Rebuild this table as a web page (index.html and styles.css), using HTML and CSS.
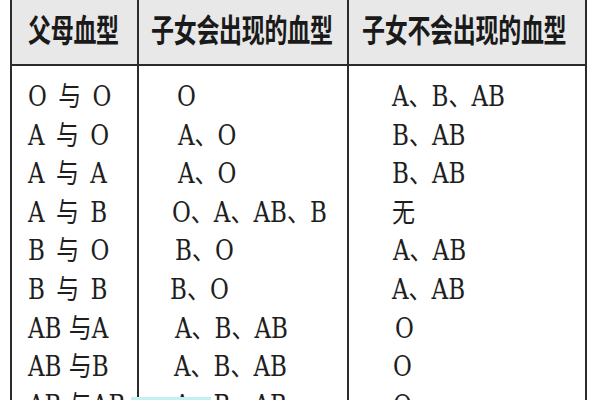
FILE: index.html
```html
<!DOCTYPE html>
<html lang="zh-CN">
<head>
<meta charset="utf-8">
<title>血型遗传表</title>
<link rel="stylesheet" href="styles.css">
</head>
<body>
<div class="page">
  <div class="table">
    <div class="row head">
      <div class="cell c1"><span class="ht">父母血型</span></div>
      <div class="cell c2"><span class="ht">子女会出现的血型</span></div>
      <div class="cell c3"><span class="ht">子女不会出现的血型</span></div>
    </div>
    <div class="row first">
      <div class="cell c1"><span class="bt pair">O 与 O</span></div>
      <div class="cell c2"><span class="bt s2">O</span></div>
      <div class="cell c3"><span class="bt">A、B、AB</span></div>
    </div>
    <div class="row">
      <div class="cell c1"><span class="bt pair">A 与 O</span></div>
      <div class="cell c2"><span class="bt s3">A、O</span></div>
      <div class="cell c3"><span class="bt">B、AB</span></div>
    </div>
    <div class="row">
      <div class="cell c1"><span class="bt pair">A 与 A</span></div>
      <div class="cell c2"><span class="bt s3">A、O</span></div>
      <div class="cell c3"><span class="bt">B、AB</span></div>
    </div>
    <div class="row">
      <div class="cell c1"><span class="bt pair">A 与 B</span></div>
      <div class="cell c2"><span class="bt s0">O、A、AB、B</span></div>
      <div class="cell c3"><span class="bt">无</span></div>
    </div>
    <div class="row">
      <div class="cell c1"><span class="bt pair">B 与 O</span></div>
      <div class="cell c2"><span class="bt s1">B、O</span></div>
      <div class="cell c3"><span class="bt s1">A、AB</span></div>
    </div>
    <div class="row">
      <div class="cell c1"><span class="bt pair">B 与 B</span></div>
      <div class="cell c2"><span class="bt sn">B、O</span></div>
      <div class="cell c3"><span class="bt">A、AB</span></div>
    </div>
    <div class="row">
      <div class="cell c1"><span class="bt">AB 与A</span></div>
      <div class="cell c2"><span class="bt s1">A、B、AB</span></div>
      <div class="cell c3"><span class="bt s2">O</span></div>
    </div>
    <div class="row">
      <div class="cell c1"><span class="bt">AB 与B</span></div>
      <div class="cell c2"><span class="bt">A、B、AB</span></div>
      <div class="cell c3"><span class="bt s1">O</span></div>
    </div>
    <div class="row">
      <div class="cell c1"><span class="bt">AB 与AB</span></div>
      <div class="cell c2"><span class="bt">A、B、AB</span></div>
      <div class="cell c3"><span class="bt s1">O</span></div>
    </div>
  </div>
  <div class="glint"></div>
</div>
</body>
</html>
```

FILE: styles.css
```css
html, body {
  margin: 0;
  padding: 0;
  background: #ffffff;
}

.page {
  position: relative;
  width: 600px;
  height: 400px;
  overflow: hidden;
  background: #ffffff;
}

.table {
  margin-left: 10px;
  width: 577px;
  display: flex;
  flex-direction: column;
}

.row {
  display: grid;
  grid-template-columns: 127px 210px 240px;
}

.cell {
  border-left: 2px solid #2b2b2b;
  box-sizing: border-box;
  display: flex;
  align-items: center;
  height: 38.6px;
  color: #1e1e1e;
}

.cell.c3 {
  border-right: 2px solid #2b2b2b;
}

.head .cell {
  height: 66px;
  background: #e8e8e8;
  border-bottom: 2px solid #2b2b2b;
  align-items: flex-start;
}

.first .cell {
  height: 50.6px;
  padding-top: 12px;
}

.ht {
  display: inline-block;
  font-family: "Noto Sans CJK SC", sans-serif;
  font-weight: 700;
  font-size: 23px;
  line-height: 56px;
  letter-spacing: -0.3px;
  color: #1a1a1a;
  transform: scaleY(1.38);
  white-space: nowrap;
}

.head .c1 { padding-left: 16px; }
.head .c2 { padding-left: 12px; }
.head .c3 { padding-left: 13px; }

.bt {
  display: inline-block;
  font-family: "DejaVu Serif", "Noto Sans CJK SC", serif;
  font-size: 23px;
  line-height: 38.6px;
  transform: scaleY(1.18);
  white-space: nowrap;
}

.pair {
  word-spacing: 4px;
}

.c1 { padding-left: 16px; }
.c2 { padding-left: 35px; }
.c3 { padding-left: 43px; }

.s0 { margin-left: -2px; }
.s1 { margin-left: 1px; }
.s2 { margin-left: 3px; }
.s3 { margin-left: 4px; }
.sn { margin-left: -4px; }

.glint {
  position: absolute;
  left: 131px;
  top: 397px;
  width: 80px;
  height: 3px;
  background: #c4f0f2;
}
```
